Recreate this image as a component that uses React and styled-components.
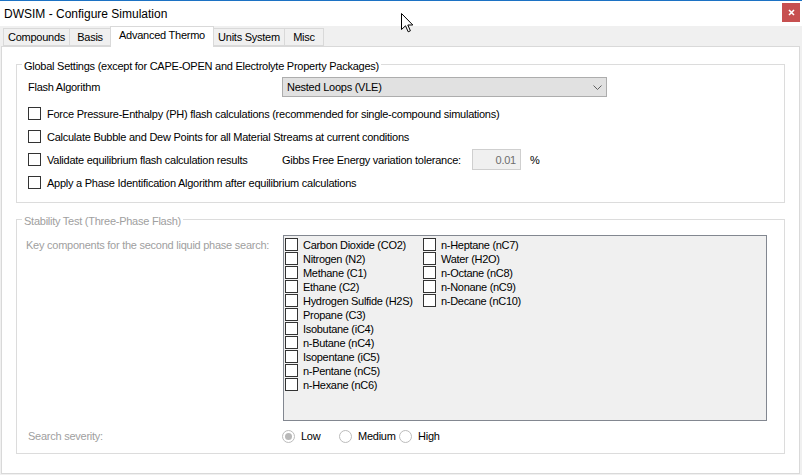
import styled, { createGlobalStyle } from 'styled-components';

const GlobalStyle = createGlobalStyle`
  html, body {
    margin: 0;
    padding: 0;
    background: #ffffff;
  }
  body {
    font-family: 'Liberation Sans', Arial, sans-serif;
    font-size: 11px;
    color: #000000;
  }
`;

const Window = styled.div`
  position: relative;
  width: 802px;
  height: 475px;
  box-sizing: border-box;
  border-top: 1px solid #1c72c4;
  background: #f0f0f0;
  display: flex;
  flex-direction: column;
  overflow: hidden;
`;

const TitleBar = styled.div`
  height: 25px;
  flex-shrink: 0;
  background: #ffffff;
  display: flex;
  align-items: center;
  justify-content: space-between;
  padding-left: 4px;
`;

const TitleText = styled.span`
  font-family: 'Liberation Sans', Arial, sans-serif;
  font-size: 12px;
  color: #000;
`;

const CloseButton = styled.div`
  align-self: flex-start;
  margin-top: 2px;
  margin-right: 2px;
  width: 18px;
  height: 19px;
  background: #c75050;
  display: flex;
  align-items: center;
  justify-content: center;
`;

const Cursor = styled.svg`
  position: absolute;
  left: 401px;
  top: 12px;
`;

const TabStrip = styled.div`
  height: 20px;
  flex-shrink: 0;
  display: flex;
  align-items: flex-end;
  padding-left: 3px;
`;

const Tab = styled.div`
  position: relative;
  box-sizing: border-box;
  width: ${({ $w }) => $w}px;
  height: ${({ $active }) => ($active ? 21 : 18)}px;
  margin-right: -1px;
  margin-bottom: ${({ $active }) => ($active ? -1 : 0)}px;
  border: 1px solid #d9d9d9;
  border-bottom: ${({ $active }) => ($active ? 'none' : '1px solid #d9d9d9')};
  background: ${({ $active }) => ($active ? '#ffffff' : '#f0f0f0')};
  z-index: ${({ $active }) => ($active ? 2 : 1)};
  display: flex;
  align-items: ${({ $active }) => ($active ? 'flex-start' : 'center')};
  padding-top: ${({ $active }) => ($active ? 2 : 0)}px;
  justify-content: center;
  letter-spacing: -0.25px;
  white-space: nowrap;
`;

const TabPage = styled.div`
  flex: 1;
  margin: 0 2px 1px 1px;
  border: 1px solid #d9d9d9;
  background: #ffffff;
  padding: 7px 14px 0 14px;
  display: flex;
  flex-direction: column;
  gap: 6px;
  letter-spacing: -0.25px;
`;

const GroupBox = styled.fieldset`
  margin: 0;
  min-width: 0;
  border: 1px solid #dcdcdc;
  padding: 0 12px 8px 11px;
  color: ${({ $disabled }) => ($disabled ? '#a0a0a0' : '#000')};
`;

const Legend = styled.legend`
  margin-left: -6px;
  padding: 4px 2px 0 2px;
  line-height: 16px;
  font-size: 11px;
`;

const FlashRow = styled.div`
  display: grid;
  grid-template-columns: 254px 325px;
  align-items: center;
  height: 20px;
  margin-top: 3px;
  margin-bottom: 5px;
`;

const Combo = styled.div`
  box-sizing: border-box;
  height: 20px;
  border: 1px solid #adadad;
  background: #e1e1e1;
  display: flex;
  align-items: center;
  justify-content: space-between;
  padding: 0 4px 0 4px;
`;

const OptionRow = styled.div`
  display: flex;
  align-items: center;
  height: 23px;
`;

const CheckItem = styled.label`
  display: flex;
  align-items: center;
  gap: 6px;
  width: ${({ $w }) => ($w ? `${$w}px` : 'auto')};
  white-space: nowrap;
`;

const Box = styled.span`
  box-sizing: border-box;
  width: 13px;
  height: 13px;
  flex-shrink: 0;
  border: 1px solid #333333;
  background: #ffffff;
`;

const GibbsLabel = styled.span`
  width: 190px;
  white-space: nowrap;
`;

const NumberBox = styled.div`
  box-sizing: border-box;
  width: 49px;
  height: 21px;
  border: 1px solid #cfcfcf;
  background: #f0f0f0;
  color: #6d6d6d;
  display: flex;
  align-items: center;
  justify-content: flex-end;
  padding-right: 4px;
`;

const Unit = styled.span`
  margin-left: 9px;
`;

const StabilityGrid = styled.div`
  display: grid;
  grid-template-columns: 255px 484px;
  margin-top: 6px;
`;

const KeyLabel = styled.div`
  padding-top: 2px;
  line-height: 16px;
  margin-left: -2px;
`;

const CheckList = styled.div`
  box-sizing: border-box;
  height: 186px;
  border: 1px solid #828790;
  background: #f0f0f0;
  padding: 2px 0 0 1px;
  display: grid;
  grid-auto-flow: column;
  grid-template-rows: repeat(11, 14px);
  grid-template-columns: 138px 1fr;
  align-content: start;
  color: #000;
  letter-spacing: -0.3px;
`;

const ListItem = styled.div`
  display: flex;
  align-items: flex-start;
  gap: 5px;
  line-height: 14px;
  white-space: nowrap;
`;

const SeverityRow = styled.div`
  display: grid;
  grid-template-columns: 254px auto;
  align-items: center;
  height: 18px;
  margin-top: 6px;
`;

const RadioGroup = styled.div`
  display: flex;
  align-items: center;
`;

const RadioItem = styled.label`
  display: flex;
  align-items: center;
  gap: 6px;
  width: ${({ $w }) => ($w ? `${$w}px` : 'auto')};
  color: #000;
  white-space: nowrap;
`;

const RadioCircle = styled.span`
  box-sizing: border-box;
  width: 13px;
  height: 13px;
  border-radius: 50%;
  border: 1px solid #bcbcbc;
  background: #ffffff;
  display: flex;
  align-items: center;
  justify-content: center;

  &::after {
    content: '';
    display: ${({ $checked }) => ($checked ? 'block' : 'none')};
    width: 7px;
    height: 7px;
    border-radius: 50%;
    background: #b8b8b8;
  }
`;

const tabs = [
  { label: 'Compounds', w: 67 },
  { label: 'Basis', w: 42 },
  { label: 'Advanced Thermo', w: 104, active: true },
  { label: 'Units System', w: 72 },
  { label: 'Misc', w: 40 },
];

const compounds = [
  'Carbon Dioxide (CO2)',
  'Nitrogen (N2)',
  'Methane (C1)',
  'Ethane (C2)',
  'Hydrogen Sulfide (H2S)',
  'Propane (C3)',
  'Isobutane (iC4)',
  'n-Butane (nC4)',
  'Isopentane (iC5)',
  'n-Pentane (nC5)',
  'n-Hexane (nC6)',
  'n-Heptane (nC7)',
  'Water (H2O)',
  'n-Octane (nC8)',
  'n-Nonane (nC9)',
  'n-Decane (nC10)',
];

const severities = [
  { label: 'Low', w: 57, checked: true },
  { label: 'Medium', w: 60 },
  { label: 'High' },
];

export default function App() {
  return (
    <Window>
      <GlobalStyle />
      <TitleBar>
        <TitleText>DWSIM - Configure Simulation</TitleText>
        <CloseButton>
          <svg width="7" height="7" viewBox="0 0 7 7">
            <path d="M1 1L6 6M6 1L1 6" stroke="#fff" strokeWidth="1.6" />
          </svg>
        </CloseButton>
      </TitleBar>

      <TabStrip>
        {tabs.map((t) => (
          <Tab key={t.label} $w={t.w} $active={t.active}>
            {t.label}
          </Tab>
        ))}
      </TabStrip>

      <TabPage>
        <GroupBox>
          <Legend>Global Settings (except for CAPE-OPEN and Electrolyte Property Packages)</Legend>
          <FlashRow>
            <span>Flash Algorithm</span>
            <Combo>
              <span>Nested Loops (VLE)</span>
              <svg width="9" height="5" viewBox="0 0 9 5">
                <path d="M0.5 0.5L4.5 4.5L8.5 0.5" stroke="#606060" strokeWidth="1" fill="none" />
              </svg>
            </Combo>
          </FlashRow>
          <OptionRow>
            <CheckItem>
              <Box />
              Force Pressure-Enthalpy (PH) flash calculations (recommended for single-compound simulations)
            </CheckItem>
          </OptionRow>
          <OptionRow>
            <CheckItem>
              <Box />
              Calculate Bubble and Dew Points for all Material Streams at current conditions
            </CheckItem>
          </OptionRow>
          <OptionRow>
            <CheckItem $w={254}>
              <Box />
              Validate equilibrium flash calculation results
            </CheckItem>
            <GibbsLabel>Gibbs Free Energy variation tolerance:</GibbsLabel>
            <NumberBox>0.01</NumberBox>
            <Unit>%</Unit>
          </OptionRow>
          <OptionRow>
            <CheckItem>
              <Box />
              Apply a Phase Identification Algorithm after equilibrium calculations
            </CheckItem>
          </OptionRow>
        </GroupBox>

        <GroupBox $disabled>
          <Legend>Stability Test (Three-Phase Flash)</Legend>
          <StabilityGrid>
            <KeyLabel>Key components for the second liquid phase search:</KeyLabel>
            <CheckList>
              {compounds.map((c) => (
                <ListItem key={c}>
                  <Box />
                  {c}
                </ListItem>
              ))}
            </CheckList>
          </StabilityGrid>
          <SeverityRow>
            <span>Search severity:</span>
            <RadioGroup>
              {severities.map((s) => (
                <RadioItem key={s.label} $w={s.w}>
                  <RadioCircle $checked={s.checked} />
                  {s.label}
                </RadioItem>
              ))}
            </RadioGroup>
          </SeverityRow>
        </GroupBox>
      </TabPage>

      <Cursor width="13" height="20" viewBox="0 0 13 20">
        <path
          d="M0.5 0.5L0.5 16.5L4.5 12.8L7.2 18.8L9.4 17.8L6.8 12L11.8 12Z"
          fill="#ffffff"
          stroke="#000000"
          strokeWidth="1"
          strokeLinejoin="miter"
        />
      </Cursor>
    </Window>
  );
}
